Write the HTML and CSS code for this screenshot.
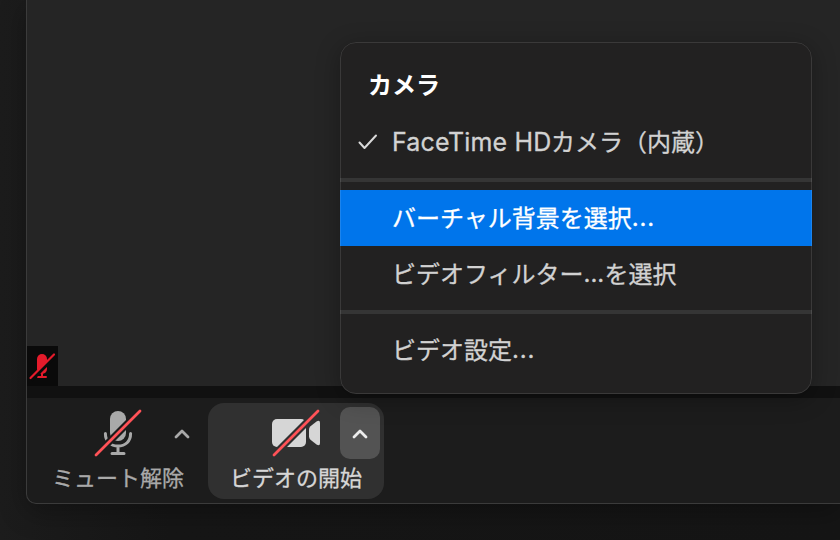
FILE: index.html
```
<!DOCTYPE html>
<html lang="ja">
<head>
<meta charset="utf-8">
<title>カメラ</title>
<link rel="stylesheet" href="styles.css">
</head>
<body>
<main class="window">
  <section class="stage">
    <div class="muted">
      <svg width="31" height="40" viewBox="0 0 31 40">
        <rect x="10" y="8" width="10" height="20" rx="5" fill="#e41b2b"/>
        <path d="M15 27v4M11 31h8" fill="none" stroke="#e41b2b" stroke-width="2" stroke-linecap="round"/>
        <path d="M4 34L28 10" stroke="#0a0a0a" stroke-width="4"/>
        <path d="M3.5 32L27 8.5" stroke="#e41b2b" stroke-width="2.2" stroke-linecap="round"/>
      </svg>
    </div>
  </section>
  <footer class="toolbar">
    <div class="tool audio">
      <div class="controls">
        <svg class="icon" width="50" height="52" viewBox="0 0 50 52">
          <rect x="17" y="4" width="16" height="30" rx="8" fill="#a9a9a9"/>
          <path d="M12.4 26.5c0 8 5.2 12.500 12.600 12.500s12.600-4.500 12.600-12.500M25 39v7.500M19 46.500h12" fill="none" stroke="#a9a9a9" stroke-width="3" stroke-linecap="round"/>
          <path d="M3 48L47 4" stroke="#1c1c1c" stroke-width="7"/>
          <path d="M3 48L47 4" stroke="#ff5257" stroke-width="2.8" stroke-linecap="round"/>
        </svg>
        <span class="arrow"><svg width="16" height="10" viewBox="0 0 16 10"><path d="M2 8L8 2l6 6" fill="none" stroke="currentColor" stroke-width="2.8" stroke-linecap="round" stroke-linejoin="round"/></svg></span>
      </div>
      <div class="label">ミュート解除</div>
    </div>
    <div class="tool video">
      <div class="controls">
        <svg class="icon" width="52" height="52" viewBox="0 0 52 52">
          <rect x="3" y="12" width="34" height="28" rx="5" fill="#d6d6d6"/>
          <path d="M40 22.500Q40 20.500 41.500 19.200L47.500 14.500Q51 12.500 51 16v20q0 3.500-3.500 1.500L41.500 32.800Q40 31.500 40 29.500z" fill="#d6d6d6"/>
          <path d="M5 48L49 4" stroke="#303030" stroke-width="7"/>
          <path d="M5 48L49 4" stroke="#ff5257" stroke-width="2.8" stroke-linecap="round"/>
        </svg>
        <span class="arrow active"><svg width="16" height="10" viewBox="0 0 16 10"><path d="M2 8L8 2l6 6" fill="none" stroke="currentColor" stroke-width="2.8" stroke-linecap="round" stroke-linejoin="round"/></svg></span>
      </div>
      <div class="label">ビデオの開始</div>
    </div>
  </footer>
</main>
<nav class="menu">
  <h2 class="heading">カメラ</h2>
  <div class="item checked">
    <svg class="check" width="20" height="16" viewBox="0 0 20 16"><path d="M1.500 8.500L6.500 14 18 1.500" fill="none" stroke="#d9d9d9" stroke-width="2" stroke-linecap="round" stroke-linejoin="round"/></svg>
    <span class="latin">FaceTime HD</span><span class="text">カメラ（内蔵）</span>
  </div>
  <hr>
  <div class="item selected"><span class="text">バーチャル背景を選択</span><span class="dots">...</span></div>
  <div class="item"><span class="text">ビデオフィルター</span><span class="dots mid">...</span><span class="text">を選択</span></div>
  <hr>
  <div class="item"><span class="text">ビデオ設定</span><span class="dots">...</span></div>
</nav>
</body>
</html>
```

FILE: styles.css
```
* { box-sizing: border-box; }

body {
  margin: 0;
  width: 840px;
  height: 540px;
  overflow: hidden;
  background: linear-gradient(90deg, #1c1c1c, #161616 170px, #151515);
  font-family: "Noto Sans CJK JP", sans-serif;
}

svg { display: block; flex: none; }

.window {
  margin-left: 26px;
  height: 504px;
  border: solid #3b3b3b;
  border-width: 0 0 1px 1px;
  border-bottom-left-radius: 10px;
  overflow: hidden;
  background: #1c1c1c;
  box-shadow: 0 8px 28px rgba(0, 0, 0, .3);
}

.stage {
  height: 398px;
  display: flex;
  align-items: flex-end;
  background: #252525;
  border-bottom: 12px solid #111;
}

.muted { background: #0a0a0a; }

.toolbar {
  display: flex;
  height: 105px;
  padding-top: 5px;
}

.tool {
  height: 96px;
  width: 176px;
  border-radius: 16px;
  color: #a9a9a9;
}

.audio { margin-left: 3px; margin-right: 2px; }
.video { background: #303030; color: #d6d6d6; }

.controls {
  display: flex;
  height: 60px;
  padding-top: 4px;
}

.audio .icon { margin-left: 63px; }
.video .icon { margin-left: 61px; }

.arrow {
  width: 40px;
  height: 52px;
  margin-left: 19px;
  padding-top: 2px;
  display: grid;
  place-items: center;
  border-radius: 10px;
}

.active { background: #535353; color: #ececec; }

.label {
  margin-top: -3px;
  padding-left: 22px;
  font-size: 22px;
  line-height: 32px;
  white-space: nowrap;
  -webkit-text-stroke: .3px currentColor;
}

.menu {
  position: absolute;
  left: 340px;
  top: 42px;
  width: 472px;
  height: 352px;
  overflow: hidden;
  border-radius: 16px;
  background: #222121;
  box-shadow: 0 5px 24px rgba(0, 0, 0, .3);
}

.menu::after {
  content: "";
  position: absolute;
  inset: 0;
  border: 1px solid rgba(255, 255, 255, .11);
  border-radius: inherit;
}

.heading {
  margin: 0;
  padding: 14px 0 0 28px;
  height: 72px;
  color: #fff;
  font-size: 24px;
  line-height: 56px;
  font-weight: 700;
}

.item {
  display: flex;
  align-items: center;
  height: 56px;
  padding-left: 52px;
  color: #d2d2d2;
  font-size: 24px;
  line-height: 56px;
  white-space: nowrap;
  -webkit-text-stroke: .3px currentColor;
}

.text { padding-bottom: 2px; }
.checked { padding-left: 18px; }
.check { margin-right: 14px; }
.latin { width: 159px; font-family: Inter, sans-serif; font-size: 25px; letter-spacing: .2px; }
.dots { font-family: Inter, sans-serif; letter-spacing: .8px; }
.mid { width: 21px; letter-spacing: 0; }

hr {
  margin: 8px 0;
  height: 4px;
  border: 0;
  background: #353535;
}

.selected { background: #0075eb; color: #fff; }
```
